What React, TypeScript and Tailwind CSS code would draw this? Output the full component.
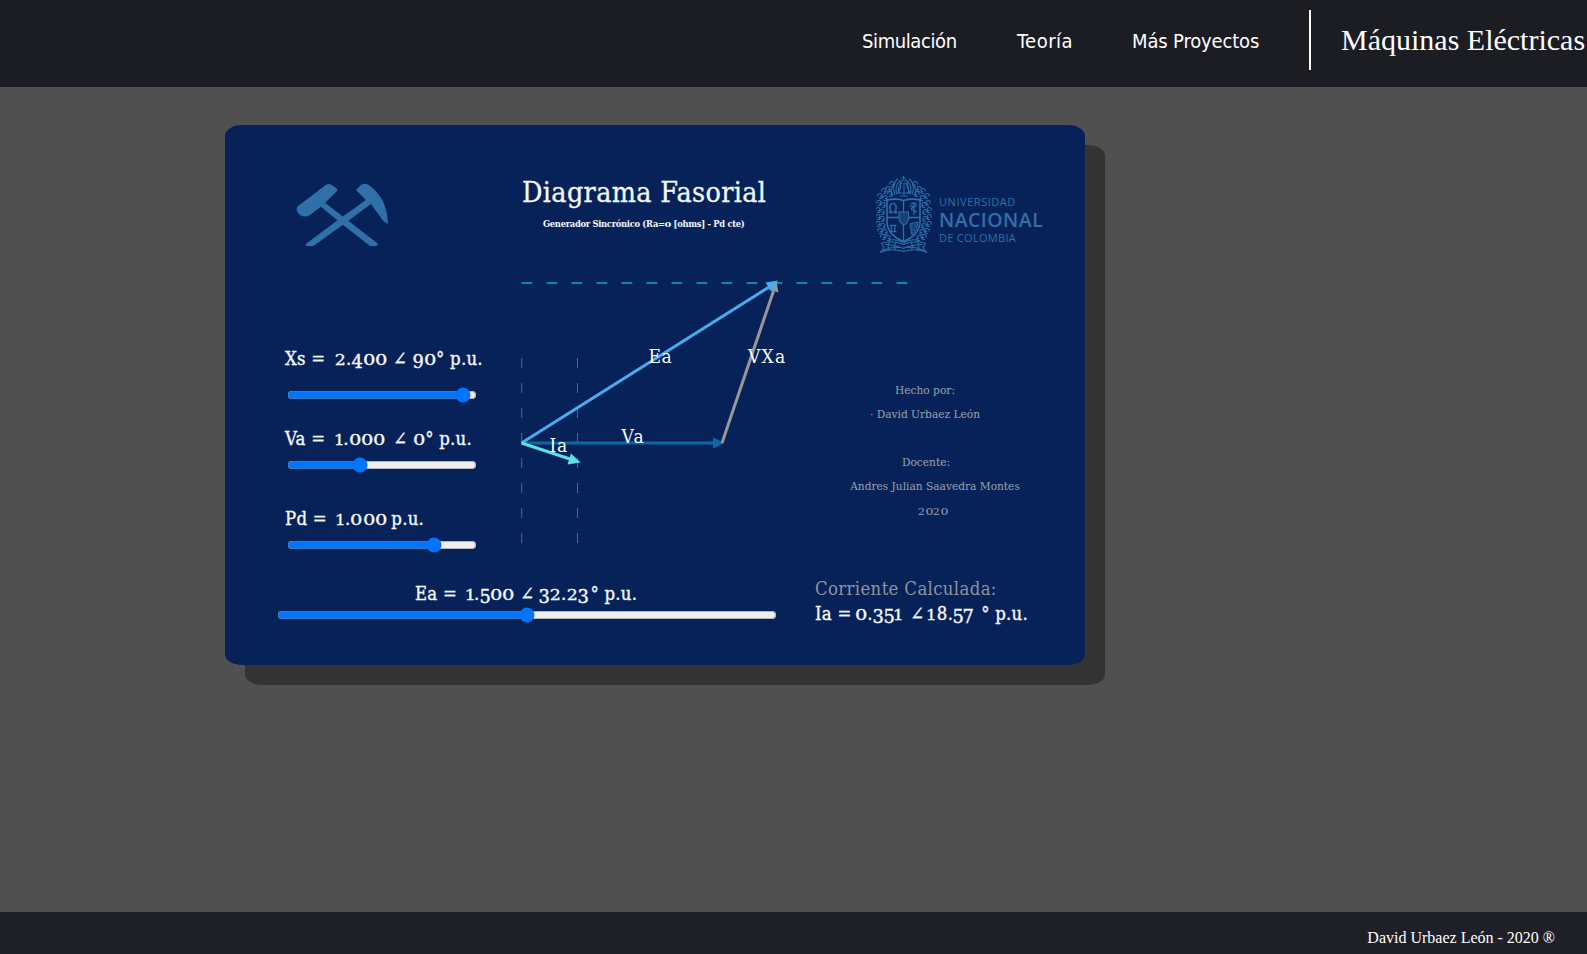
import React from 'react';

const georgia = "font-['DejaVu_Serif_Condensed','DejaVu_Serif',serif] [font-stretch:condensed]";

const digitWidth = [0.67, 0.465, 0.605, 0.595, 0.61, 0.57, 0.61, 0.54, 0.64, 0.61];

/* Old-style figures: 0-2 sit at x-height, 3 4 5 7 9 hang below the baseline. */
function Digits({ value }: { value: string }) {
  return (
    <>
      {value.split('').map((c, i) => {
        if (c < '0' || c > '9') return <React.Fragment key={i}>{c}</React.Fragment>;
        const n = Number(c);
        const small = n <= 2;
        const low = n === 3 || n === 4 || n === 5 || n === 7 || n === 9;
        return (
          <span key={i} className="inline-flex justify-center tracking-normal" style={{ width: `${digitWidth[n]}em` }}>
            <span
              className={
                small
                  ? n === 0
                    ? 'inline-block origin-[50%_79%] scale-x-[1.18] scale-y-[0.76]'
                    : 'inline-block origin-[50%_79%] scale-x-[1.05] scale-y-[0.76]'
                  : low
                    ? 'inline-block translate-y-[0.15em] scale-x-[1.08]'
                    : 'inline-block'
              }
            >
              {c}
            </span>
          </span>
        );
      })}
    </>
  );
}

function Slider({ value, className }: { value: number; className: string }) {
  return <input type="range" min={0} max={100} step="any" defaultValue={value} className={`block h-4 ${className}`} />;
}

function Hammers() {
  return (
    <svg width="94" height="64" viewBox="0 0 94 64" fill="#2f70a8">
      <path d="M24 22 29 18.8 49 34.2 81.7 59.5Q82 62.3 79 62.3L74 62 44 38.5Z" />
      <path d="M70.5 15.5 75 20 50 38.5 17.5 62 12 62.3Q9 62 9.7 60L44 34.5Z" />
      <path d="M30 0.8Q32.5 -0.6 35 0.6L40.5 4.2Q42 5.6 40.5 7.5L27 21 14 31Q9 34 4 31 -1 27 1.5 22.5Z" />
      <path d="M60 6 65.5 0.6Q69 -0.6 72 0.4 81 6 87.3 18 91.5 28 92 40L87.3 37 75 20 70 16Z" />
    </svg>
  );
}

const leaves = [
  [8, 16], [4, 21], [9, 23], [3, 28], [7, 30], [2, 35], [6, 37], [2, 42], [6, 44],
  [2, 49], [7, 51], [4, 56], [9, 57], [7, 62], [12, 63], [12, 14], [14, 19], [16, 9],
];

function CrestHalf() {
  return (
    <g>
      {leaves.map(([x, y], i) => (
        <path key={i} d={`M${x - 2.4} ${y + 1}q0-3.2 2.6-3 2.4.6 1.6 2.6-.9 1.3-2 .2M${x - 1} ${y + 3}q3 .4 3.6-1.6`} />
      ))}
      <path d="M19 20Q15 10 22 4M21 20Q18 12 24 6M23 19Q21 12 26 8M17 21Q13 17 17 12" />
      <path d="M5 69Q15 65 28 70M5 69L8 73 4 78Q14 73 28 77M9 70Q18 70 28 74M12 66Q20 64 27 68M7 76Q15 72 24 73" />
      <path d="M14 67Q10 72 14 76M20 68Q17 72 20 75" />
    </g>
  );
}

function Crest() {
  return (
    <svg width="56" height="80" viewBox="0 0 56 80" fill="none" stroke="#2f70a8" strokeWidth="1.05">
      <g transform="translate(0 -0.5)">
        <CrestHalf />
        <g transform="translate(55 0) scale(-1 1)">
          <CrestHalf />
        </g>
      </g>
      <path d="M27.5 1V4M25.7 3H29.700M24 7Q28 3 32 7L31 12 34 18H22L25 12ZM24 21H32M28 8V20" />
      <path d="M11 25Q20 23 27.5 25.5 36 23 44 25V47Q43.500 60 27.5 66.5 11.5 60 11 47Z" strokeWidth="1.6" />
      <path d="M27.5 26V37M27.5 49V66M11 42.5H23M32.5 42.5H44" strokeWidth="1.3" />
      <path d="M23 37H32.5V44Q32 48 27.8 50 23.500 48 23 44Z" fill="#2f70a8" fillOpacity="0.4" />
      <path d="M35 29Q41 26 40 31 34 33 36 35 41 35 40 38M38 28V40M33.500 31H37" strokeWidth="1.2" />
      <path d="M34 49 42 47Q42 54 36 60ZM36 49V58M38 49V56M40 48V53" strokeWidth="1" />
      <g fill="#2f70a8" strokeWidth="0.3" className="font-['DejaVu_Serif',serif] text-[12px]">
        <text x="12.500" y="38">Ω</text>
        <text x="13.500" y="56.500">π</text>
      </g>
    </svg>
  );
}

const ink = 'fill-white [-webkit-text-stroke:0.25px_white]';

function Phasors() {
  return (
    <svg width="400" height="290" viewBox="515 270 400 290" className={`${georgia} text-[19px]`}>
      <path d="M521.5 283H908" stroke="#0b8a98" strokeWidth="1.9" strokeDasharray="10.8 14.2" />
      <path d="M521.7 358V545M577.5 358V545" stroke="#5b6678" strokeWidth="1" strokeDasharray="10 15" />
      <path d="M522 443H714" stroke="#0a68a4" strokeWidth="3" />
      <path d="M713 437.3 724.5 443 713 448.7Z" fill="#0a68a4" />
      <path d="M722 443 773.5 291" stroke="#979797" strokeWidth="3" />
      <path d="M776.5 281 778.5 292.5 768.5 289.5Z" fill="#979797" />
      <path d="M521.5 443 769 287" stroke="#4aabef" strokeWidth="3" />
      <path d="M778 280.5 771.5 291.5 765.5 282.5Z" fill="#4aabef" />
      <path d="M521.5 443 570 459" stroke="#5fe0e6" strokeWidth="3" />
      <path d="M580.5 462.5 567.5 464.5 571 453.5Z" fill="#5fe0e6" />
      <text x="648.5" y="363" className={ink} letterSpacing="0.5">Ea</text>
      <text x="748" y="363" className={ink} letterSpacing="1.2">VXa</text>
      <text x="621.5" y="443" className={ink} letterSpacing="1.5">Va</text>
      <text x="549.5" y="452" className={ink} letterSpacing="0.8">Ia</text>
    </svg>
  );
}

const label = 'whitespace-pre text-[18.4px] leading-6 tracking-[0.25px]';
const bright = 'text-[#f4f8fc] [-webkit-text-stroke:0.35px_#f4f8fc]';

export default function App() {
  return (
    <div className="flex h-[954px] w-[1587px] flex-col overflow-hidden bg-[#505050]">
      <header className="flex h-[87px] shrink-0 items-start justify-end bg-[#1c1c23] pt-[10px] text-white">
        <nav className="flex h-[62px] items-center gap-[60px] pr-[49px] font-['DejaVu_Sans_Condensed','DejaVu_Sans',sans-serif] text-[20px] [font-stretch:condensed]">
          <a className="w-[95px] whitespace-nowrap tracking-[-0.4px]">Simulación</a>
          <a className="w-[55px] whitespace-nowrap tracking-[0.5px]">Teoría</a>
          <a className="w-[128px] whitespace-nowrap tracking-[-0.15px]">Más Proyectos</a>
        </nav>
        <div className="flex h-[60px] w-[278px] items-center whitespace-nowrap border-l-2 border-white pb-[2px] pl-[30px] font-['Liberation_Serif',serif] text-[30px]">
          Máquinas Eléctricas
        </div>
      </header>

      <main className="grow pl-[225px] pt-[38px]">
        <section className={`flex h-[540px] w-[860px] flex-col rounded-[2%] bg-[#072258] shadow-[20px_20px_0_#333333] ${georgia}`}>
          <div className="flex h-[145px] shrink-0">
            <div className="w-[297px] pl-[71px] pt-[59px]">
              <Hammers />
            </div>
            <div className="w-[354px] text-[#f4f8fc]">
              <h1 className="pt-[48px] text-[28.4px] leading-10 tracking-[0.35px] [-webkit-text-stroke:0.3px_#f4f8fc]">Diagrama Fasorial</h1>
              <p className="whitespace-nowrap pl-[21px] pt-[3px] text-[9.3px] font-bold leading-4 tracking-[-0.3px]">
                Generador Sincrónico (Ra=<Digits value="0" /> [ohms] - Pd cte)
              </p>
            </div>
            <div className="flex pt-[50px]">
              <Crest />
              <div className="ml-[7px] whitespace-nowrap pt-[20px] font-['Open_Sans',sans-serif] text-[#2f70a8] [font-stretch:normal]">
                <div className="text-[11px] leading-[14px] tracking-[0.55px]">UNIVERSIDAD</div>
                <div className="text-[19.5px] font-semibold leading-[22px] tracking-[0.45px]">NACIONAL</div>
                <div className="text-[11px] leading-[14px] tracking-[0.3px]">DE COLOMBIA</div>
              </div>
            </div>
          </div>

          <div className="flex h-[290px] shrink-0">
            <div className="w-[290px] shrink-0 pl-[60px] pt-[77px]">
              <p className={`${label} ${bright}`}>Xs = <span className="ml-[4px]"><Digits value="2.400" /></span> ∠ <Digits value="90" />° p.u.</p>
              <Slider value={96.6} className="ml-[2px] mt-4 w-[190px]" />
              <p className={`mt-6 ${label} ${bright}`}>Va = <span className="ml-[4px]"><Digits value="1.000" /></span> <span className="ml-[2px]">∠</span> <Digits value="0" />° p.u.</p>
              <Slider value={37.2} className="ml-[2px] mt-[6px] w-[190px]" />
              <p className={`mt-[34px] ${label} ${bright}`}>Pd = <span className="ml-[4px]"><Digits value="1.000" /></span><span className="ml-[4px]">p.u.</span></p>
              <Slider value={79.8} className="ml-[2px] mt-[6px] w-[190px]" />
            </div>
            <div className="w-[322px] shrink-0 overflow-visible">
              <Phasors />
            </div>
            <div className="flex w-[196px] flex-col items-center whitespace-pre pt-[108px] text-[11.8px] leading-6 text-[#9aa3b0]">
              <p className="-translate-x-[10px]">Hecho por:</p>
              <p className="-translate-x-[10px]">· David Urbaez León</p>
              <p className="h-6" />
              <p className="-translate-x-[9px]">Docente:</p>
              <p>Andres Julian Saavedra Montes</p>
              <p className="-translate-x-[2px]"><Digits value="2020" /></p>
            </div>
          </div>

          <div className="flex grow">
            <div className="w-[590px] pl-[52px] pt-[22px]">
              <p className={`pl-[138px] ${label} ${bright}`}>Ea = <span className="ml-[3px]"><Digits value="1.500" /></span> ∠ <span className="-ml-px"><Digits value="32.23" /></span><span className="ml-[2px]">° p.u.</span></p>
              <Slider value={50} className="mt-[1px] w-[500px]" />
            </div>
            <div className={`pt-[17px] ${label}`}>
              <p className="tracking-[0.35px] text-[#8e949e]">Corriente Calculada:</p>
              <p className={`mt-[1px] ${bright}`}>Ia = <span className="-ml-[2px]"><Digits value="0.351" /></span> <span className="ml-[2px]">∠</span><span className="ml-[3px]"><Digits value="18.57" /></span> <span className="ml-[2px]">° p.u.</span></p>
            </div>
          </div>
        </section>
      </main>

      <footer className="flex h-[42px] shrink-0 justify-end bg-[#1f1f28] pr-[32px] pt-[14px] font-['Liberation_Serif',serif] text-[16px] leading-6 text-white">
        David Urbaez León - 2020 ®
      </footer>
    </div>
  );
}
